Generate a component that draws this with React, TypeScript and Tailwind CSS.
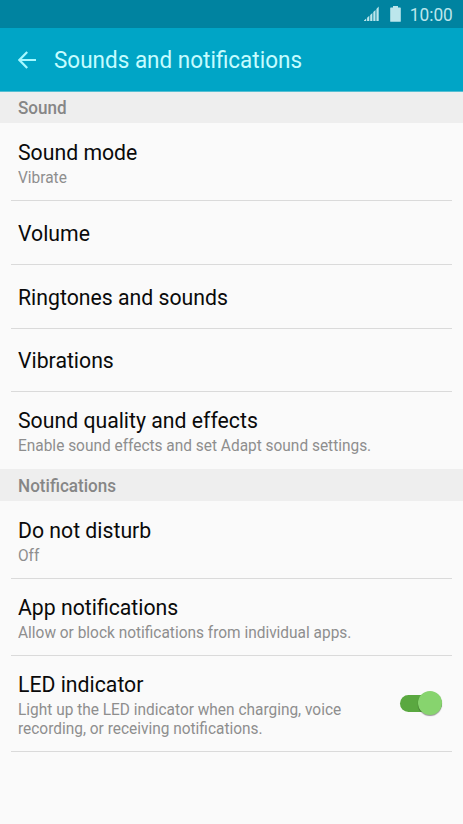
import clsx from "clsx";

type SettingRowProps = {
  title: string;
  detail?: string;
  className: string;
  divider?: boolean;
  checked?: boolean;
};

const SignalIcon = () => (
  <svg width="15" height="16" viewBox="0 0 15 16" fill="#bce6ec">
    <path d="M0 15V14.6L2.2 12.5V15zM3.1 15V11.8L5.3 9.7V15zM6.2 15V9L8.4 6.9V15zM9.3 15V6.1L11.5 4V15zM12.4 15V2.9L14.7 0.6V15z" />
  </svg>
);

const BatteryIcon = () => (
  <svg width="11" height="17" viewBox="0 0 11 17" fill="#bce6ec">
    <path d="M3 0h5v1.6h2.2a.6.6 0 0 1 .6.6v13a.6.6 0 0 1-.6.6H.8a.6.6 0 0 1-.6-.6v-13a.6.6 0 0 1 .6-.6H3z" />
  </svg>
);

const BackIcon = () => (
  <svg width="18" height="18" viewBox="0 0 18 18" fill="none" stroke="#a5f8ff" strokeWidth="2.2">
    <path d="M9.2 0.9L1.4 9L9.2 17.1M1.2 9H18" />
  </svg>
);

const Toggle = () => (
  <div className="mb-[2px] flex h-[17px] w-[42px] items-center justify-end rounded-full bg-[#5aa840]">
    <div className="mb-px h-6 w-6 shrink-0 rounded-full bg-[#87d46e] shadow-[0_1px_1px_rgba(0,0,0,0.4)]" />
  </div>
);

const SectionHeading = ({ label, className }: { label: string; className: string }) => (
  <h2
    className={clsx(
      "flex items-center bg-[#eeeeee] pl-[18px] text-[17.5px] font-medium text-[#868686]",
      className
    )}
  >
    <span className="origin-left scale-x-[0.977]">{label}</span>
  </h2>
);

const SettingRow = ({ title, detail, className, divider = true, checked }: SettingRowProps) => (
  <div
    className={clsx(
      "mx-[11px] flex items-center justify-between border-[#dadada] pr-[10px] pl-[7px]",
      divider && "border-b",
      className
    )}
  >
    {/* slightly condensed Roboto */}
    <div className="origin-left scale-x-[0.965] whitespace-pre-line">
      <h3 className="text-[22px] leading-[28px] text-[#0a0a0a]">{title}</h3>
      {detail && <p className="pt-px text-[16px] leading-[19px] text-[#8e8e8e]">{detail}</p>}
    </div>
    {checked && <Toggle />}
  </div>
);

const App = () => {
  return (
    <div className="h-[824px] w-[463px] overflow-hidden bg-[#fafafa] font-['Roboto',sans-serif]">
      <div className="flex h-7 items-center justify-end bg-[#0083a0] pr-[10px] text-[#bce6ec]">
        <SignalIcon />
        <div className="ml-[11px]">
          <BatteryIcon />
        </div>
        <span className="ml-[7px] origin-right scale-x-[0.96] pt-[2px] text-[18px] leading-[26px]">
          10:00
        </span>
      </div>
      <header className="flex h-16 items-center border-b border-[#55bfd2] bg-[#00a5c6] pl-[18px]">
        <BackIcon />
        <h1 className="ml-[18px] origin-left scale-x-[0.978] pt-[4px] text-[23px] text-[#c5fcff]">
          Sounds and notifications
        </h1>
      </header>
      <SectionHeading label="Sound" className="h-[31px] pt-px" />
      <SettingRow title="Sound mode" detail="Vibrate" className="h-[78px] pt-[3px]" />
      <SettingRow title="Volume" className="h-16 pt-[2px]" />
      <SettingRow title="Ringtones and sounds" className="h-16 pt-[2px]" />
      <SettingRow title="Vibrations" className="h-[63px] pt-[2px]" />
      <SettingRow
        title="Sound quality and effects"
        detail="Enable sound effects and set Adapt sound settings."
        className="h-[77px] pt-px"
        divider={false}
      />
      <SectionHeading label="Notifications" className="h-8 pt-[2px]" />
      <SettingRow title="Do not disturb" detail="Off" className="h-[78px] pt-[2px]" />
      <SettingRow
        title="App notifications"
        detail="Allow or block notifications from individual apps."
        className="h-[77px] pt-px"
      />
      <SettingRow
        title="LED indicator"
        detail={"Light up the LED indicator when charging, voice\nrecording, or receiving notifications."}
        className="h-24 pt-px"
        checked
      />
    </div>
  );
};

export default App;
